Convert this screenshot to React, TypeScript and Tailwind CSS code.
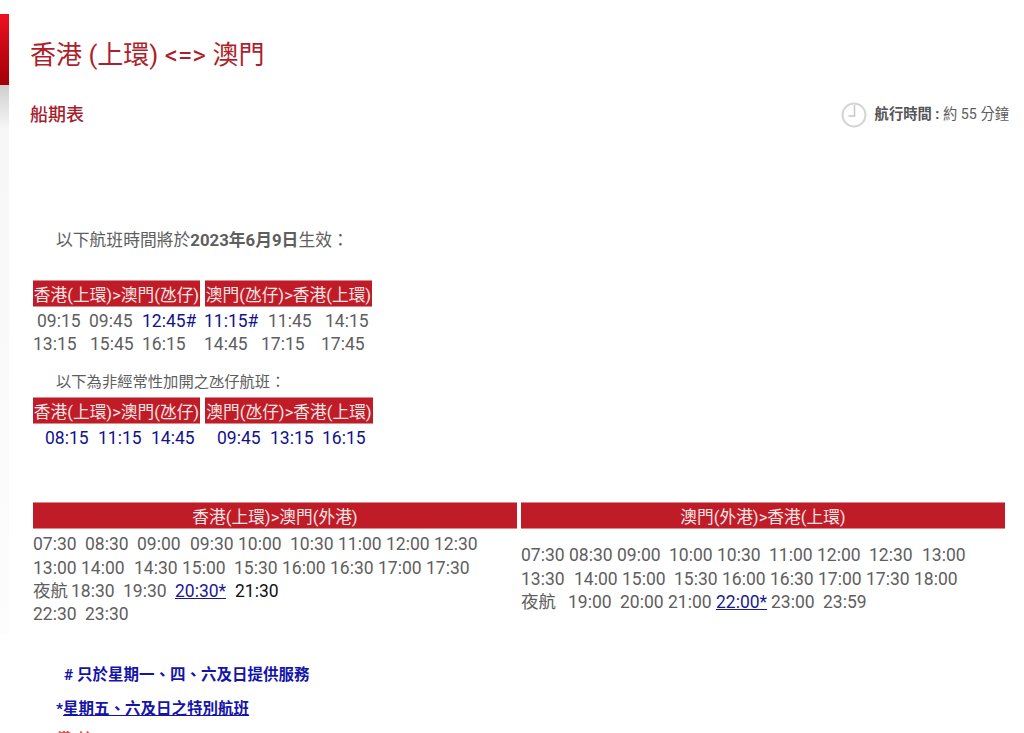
const cjk = "font-['Roboto','Noto_Sans_CJK_TC','Noto_Sans_CJK_JP',sans-serif]";

function Times({ items, className = "" }: { items: [number, React.ReactNode][]; className?: string }) {
  return (
    <div className={"flex h-[23.3px] items-center whitespace-pre " + className}>
      {items.map(([w, c], i) => (
        <span key={i} style={{ width: w }} className="shrink-0">{c}</span>
      ))}
    </div>
  );
}

function Bar({ w, children, h = "h-[27px]" }: { w: string; children: React.ReactNode; h?: string }) {
  return (
    <div className={`${w} ${h} shrink-0 bg-[#c01c28] border-y border-[#d98a90] pt-[4px] flex items-center justify-center text-[#f5e4e4] text-[16.7px] whitespace-nowrap overflow-hidden`}>
      {children}
    </div>
  );
}

const B = ({ children }: { children: React.ReactNode }) => <span className="text-[#12128c]">{children}</span>;

function Clock() {
  return (
    <svg width="26" height="26" viewBox="0 0 26 26" fill="none" stroke="#d4d4d4" strokeWidth="2">
      <circle cx="13" cy="13" r="11.5" />
      <path d="M13.5 3v11h-6" strokeWidth="1.5" stroke="#c8c8c8" />
    </svg>
  );
}

export default function App() {
  return (
    <div className={`relative h-[733px] w-[1024px] overflow-hidden bg-white text-[#5e5e5e] ${cjk}`}>
      <div className="absolute left-0 top-[14px] h-[71px] w-[9px] bg-gradient-to-b from-[#f01020] to-[#a00008]" />
      <div className="absolute left-0 top-[85px] h-[550px] w-[9px] bg-gradient-to-b from-[#cfcfcf] via-[#f7f7f7] via-[8%] to-[#fdfdfd]" />

      <div className="flex flex-col pl-[30px] pr-[15px]">
        <h1 className="mt-[38px] h-[34px] text-[26px] leading-[34px] text-[#ae1f2c] whitespace-nowrap">香港 (上環) &lt;=&gt; 澳門</h1>

        <div className="mt-[29px] flex h-[27px] items-center justify-between">
          <div className="text-[18px] font-medium text-[#a5202c]">船期表</div>
          <div className="flex items-center gap-[8px] text-[14.3px]">
            <Clock />
            <span><span className="font-bold text-[#555]">航行時間 :</span> 約 55 分鐘</span>
          </div>
        </div>

        <div className="mt-[100px] h-[24px] pl-[26px] text-[16.8px] leading-[24px] whitespace-nowrap">
          以下航班時間將於<span className="font-bold">2023年6月9日</span>生效：
        </div>

        <div className="ml-[3px] mt-[28px] flex gap-[5px]">
          <Bar w="w-[167px]">香港(上環)&gt;澳門(氹仔)</Bar>
          <Bar w="w-[167px]">澳門(氹仔)&gt;香港(上環)</Bar>
        </div>

        <div className="ml-[3px] mt-[2px] text-[17.5px]">
          <Times items={[[4, ""], [52, "09:15"], [53, "09:45"], [62, <B>12:45#</B>], [64, <B>11:15#</B>], [57, "11:45"], [50, "14:15"]]} />
          <Times items={[[57, "13:15"], [52, "15:45"], [62, "16:15"], [57, "14:45"], [60, "17:15"], [50, "17:45"]]} />
        </div>

        <div className="mt-[15px] h-[22px] pl-[26px] text-[15.3px] leading-[22px] whitespace-nowrap">以下為非經常性加開之氹仔航班：</div>

        <div className="ml-[3px] mt-[4px] flex gap-[5px]">
          <Bar w="w-[167px]">香港(上環)&gt;澳門(氹仔)</Bar>
          <Bar w="w-[168px]">澳門(氹仔)&gt;香港(上環)</Bar>
        </div>

        <div className="ml-[3px] mt-[3px] text-[17.5px]">
          <Times items={[[12, ""], [53, <B>08:15</B>], [53, <B>11:15</B>], [66, <B>14:45</B>], [53, <B>09:45</B>], [52, <B>13:15</B>], [50, <B>16:15</B>]]} />
        </div>

        <div className="ml-[3px] mt-[52px] flex gap-[4px]">
          <div className="w-[484px] shrink-0 text-[17.5px]">
            <Bar w="w-[484px]">香港(上環)&gt;澳門(外港)</Bar>
            <div className="mt-[4px]">
              <Times items={[[52, "07:30"], [52, "08:30"], [53, "09:00"], [48, "09:30"], [52, "10:00"], [48, "10:30"], [48, "11:00"], [48, "12:00"], [46, "12:30"]]} />
              <Times items={[[48, "13:00"], [53, "14:00"], [48, "14:30"], [52, "15:00"], [48, "15:30"], [48, "16:00"], [48, "16:30"], [48, "17:00"], [46, "17:30"]]} />
              <Times items={[[38, "夜航"], [52, "18:30"], [52, "19:30"], [60, <a className="text-[#1a1a90] underline">20:30*</a>], [46, <span className="text-[#111]">21:30</span>]]} />
              <Times items={[[52, "22:30"], [46, "23:30"]]} />
            </div>
          </div>
          <div className="w-[484px] shrink-0 text-[17.5px]">
            <Bar w="w-[484px]">澳門(外港)&gt;香港(上環)</Bar>
            <div className="mt-[15px]">
              <Times items={[[48, "07:30"], [48, "08:30"], [52, "09:00"], [48, "10:00"], [52, "10:30"], [48, "11:00"], [52, "12:00"], [53, "12:30"], [46, "13:00"]]} />
              <Times items={[[53, "13:30"], [48, "14:00"], [52, "15:00"], [48, "15:30"], [48, "16:00"], [48, "16:30"], [48, "17:00"], [48, "17:30"], [46, "18:00"]]} />
              <Times items={[[47, "夜航"], [52, "19:00"], [48, "20:00"], [48, "21:00"], [55, <a className="text-[#1a1a90] underline">22:00*</a>], [52, "23:00"], [46, "23:59"]]} />
            </div>
          </div>
        </div>

        <div className="mt-[38px] h-[22px] pl-[34px] text-[15.5px] font-bold leading-[22px] text-[#1414a8] whitespace-nowrap"># 只於星期一、四、六及日提供服務</div>
        <div className="mt-[12px] h-[22px] pl-[26px] text-[15.5px] font-bold leading-[22px] text-[#1414a8] whitespace-nowrap">*<span className="underline">星期五、六及日之特別航班</span></div>
        <div className="mt-[9px] pl-[26px] text-[15.5px] font-bold leading-[22px] tracking-[6px] text-[#e04848] whitespace-nowrap">備註：</div>
      </div>
    </div>
  );
}
